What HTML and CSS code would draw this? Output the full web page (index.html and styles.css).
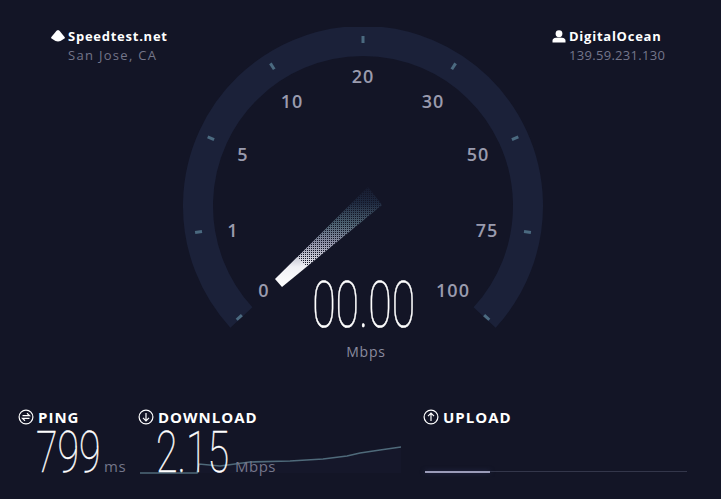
FILE: index.html
```html
<!DOCTYPE html>
<html lang="en">
<head>
  <meta charset="UTF-8" />
  <title>Speedtest</title>
  <link rel="stylesheet" href="styles.css">
</head>
<body>
  <div class="top">
    <div class="host host-left">
      <div class="host-name">
        <svg class="host-icon" width="14" height="12" viewBox="0 0 14 12"><path d="M7 0 L8.5 0.8 L13.8 7.2 L13.8 8.2 L9.5 11 Q7 11.8 4.5 11 L0.2 8.2 L0.2 7.2 L5.5 0.8 Z" fill="#fff"/></svg>
        Speedtest.net
      </div>
      <div class="host-sub">San Jose, CA</div>
    </div>

    <svg class="gauge" width="360" height="340" viewBox="-180 -179 360 340">
      <defs>
        <linearGradient id="needle-fade" x1="0" y1="0" x2="0" y2="1">
          <stop offset="0" stop-color="#161a2e"/>
          <stop offset="0.16" stop-color="#1f2a40"/>
          <stop offset="0.38" stop-color="#4f6473"/>
          <stop offset="0.56" stop-color="#8f91a6"/>
          <stop offset="0.8" stop-color="#f0f0f5"/>
          <stop offset="1" stop-color="#fff"/>
        </linearGradient>
        <pattern id="needle-dither" width="2" height="2" patternUnits="userSpaceOnUse">
          <rect width="1" height="1" fill="#131526"/>
        </pattern>
      </defs>
      <path class="ring" d="M -121.6 111.5 A 165 165 0 1 1 121.6 111.5"/>
      <g class="ticks">
        <rect x="-1.5" y="-170" width="3" height="7" transform="rotate(-132)"/>
        <rect x="-1.5" y="-170" width="3" height="7" transform="rotate(-99)"/>
        <rect x="-1.5" y="-170" width="3" height="7" transform="rotate(-66)"/>
        <rect x="-1.5" y="-170" width="3" height="7" transform="rotate(-33)"/>
        <rect x="-1.5" y="-170" width="3" height="7"/>
        <rect x="-1.5" y="-170" width="3" height="7" transform="rotate(33)"/>
        <rect x="-1.5" y="-170" width="3" height="7" transform="rotate(66)"/>
        <rect x="-1.5" y="-170" width="3" height="7" transform="rotate(99)"/>
        <rect x="-1.5" y="-170" width="3" height="7" transform="rotate(132)"/>
      </g>
      <g class="scale">
        <text x="-99" y="91">0</text>
        <text x="-130" y="31">1</text>
        <text x="-120" y="-45">5</text>
        <text x="-71" y="-98">10</text>
        <text x="0" y="-123">20</text>
        <text x="70" y="-98">30</text>
        <text x="115" y="-45">50</text>
        <text x="124" y="31">75</text>
        <text x="90" y="91">100</text>
      </g>
      <path d="M -88 73 L -81 81 L 19 -1 L 5 -19 Z" fill="url(#needle-fade)"/>
      <path d="M -66.5 50 L -56 60.5 L 19 -1 L 5 -19 Z" fill="url(#needle-dither)"/>
      <text class="speed" x="1" y="121" transform="scale(0.67 1)">00.00</text>
      <text class="speed-unit" x="3" y="151">Mbps</text>
    </svg>

    <div class="host host-right">
      <div class="host-name">
        <svg class="host-icon" width="14" height="13" viewBox="0 0 14 13"><circle cx="7" cy="3.7" r="3.4" fill="#fff"/><path d="M0.5 12.5 V10.5 Q0.5 8.3 4 7.8 Q7 7 10 7.8 Q13.5 8.3 13.5 10.5 V12.5 Z" fill="#fff"/></svg>
        DigitalOcean
      </div>
      <div class="host-sub host-ip">139.59.231.130</div>
    </div>
  </div>

  <div class="stats">
    <div class="stat stat-ping">
      <div class="stat-label">
        <svg class="stat-icon" width="16" height="16" viewBox="0 0 16 16"><circle cx="8" cy="8" r="6.9"/><path d="M4.5 6.6 H11.5 L9 4.2 M11.5 9.4 H4.5 L7 11.8"/></svg>
        PING
      </div>
      <div class="stat-body">
        <span class="stat-value">799</span><span class="stat-unit">ms</span>
      </div>
    </div>

    <div class="stat stat-download">
      <div class="stat-label">
        <svg class="stat-icon" width="16" height="16" viewBox="0 0 16 16"><circle cx="8" cy="8" r="6.9"/><path d="M8 4 V11.5 M5 8.8 L8 11.8 L11 8.8"/></svg>
        DOWNLOAD
      </div>
      <div class="stat-body">
        <svg class="chart" width="263" height="40" viewBox="0 0 263 40">
          <path class="chart-fill" d="M2 38 L59 38 L61 29 L82 31 L112 27 L152 26 L185 24 L209 21 L222 18 L242 15 L263 12 L263 38 Z"/>
          <path class="chart-line" d="M2 38 L59 38 L61 29 L82 31 L112 27 L152 26 L185 24 L209 21 L222 18 L242 15 L263 12"/>
        </svg>
        <span class="stat-value">2.15</span><span class="stat-unit">Mbps</span>
      </div>
    </div>

    <div class="stat stat-upload">
      <div class="stat-label">
        <svg class="stat-icon" width="16" height="16" viewBox="0 0 16 16"><circle cx="8" cy="8" r="6.9"/><path d="M8 12 V4.5 M5 7.2 L8 4.2 L11 7.2"/></svg>
        UPLOAD
      </div>
      <div class="upload-track"><div class="upload-done"></div></div>
    </div>
  </div>
</body>
</html>
```

FILE: styles.css
```css
body {
  margin: 0;
  background-color: #131526;
  font-family: "Open Sans", Arial, sans-serif;
  color: #fff;
  overflow: hidden;
}
.top {
  display: flex;
  padding-top: 27px;
}
.host {
  padding-top: 1px;
}
.host-left {
  width: 132px;
  padding-left: 51px;
}
.host-right {
  padding-left: 9px;
}
.host-name {
  display: flex;
  align-items: center;
  gap: 3px;
  font-size: 13px;
  font-weight: 700;
  line-height: 16px;
  letter-spacing: 0.75px;
  white-space: nowrap;
}
.host-sub {
  margin-top: 3px;
  padding-left: 17px;
  font-size: 13px;
  line-height: 16px;
  letter-spacing: 1.3px;
  color: #74768a;
  white-space: nowrap;
}
.host-ip {
  letter-spacing: 0.3px;
}
.gauge {
  display: block;
  flex: none;
}
.ring {
  fill: none;
  stroke: #1b2139;
  stroke-width: 30;
}
.ticks rect {
  fill: #4b6a80;
}
.scale text {
  fill: #9a9bae;
  font-size: 18px;
  font-weight: 600;
  letter-spacing: 1px;
  text-anchor: middle;
}
.speed {
  fill: #fff;
  stroke: #fff;
  stroke-width: 0.5;
  font-family: Roboto, sans-serif;
  font-size: 64px;
  font-weight: 100;
  text-anchor: middle;
}
.speed-unit {
  fill: #8a8b9e;
  font-size: 14px;
  text-anchor: middle;
  letter-spacing: 0.8px;
}
.stats {
  display: grid;
  grid-template-columns: 120px 285px 1fr;
  margin-top: 41px;
  padding-left: 18px;
}
.stat-label {
  display: flex;
  align-items: center;
  gap: 4px;
  font-size: 15px;
  font-weight: 700;
  line-height: 18px;
  letter-spacing: 1px;
}
.stat-icon {
  fill: none;
  stroke: #fff;
  stroke-width: 1.2;
}
.stat-body {
  position: relative;
  display: flex;
  align-items: baseline;
  height: 48px;
  padding-top: 3px;
  padding-left: 18px;
}
.stat-value {
  display: inline-block;
  font-family: Roboto, sans-serif;
  font-size: 57px;
  font-weight: 100;
  line-height: 48px;
  -webkit-text-stroke: 0.4px #fff;
  transform: scaleX(0.69);
  transform-origin: left;
}
.stat-ping .stat-value {
  width: 68px;
}
.stat-download .stat-value {
  width: 79px;
}
.stat-unit {
  position: relative;
  font-size: 15px;
  letter-spacing: 0.5px;
  color: #74768a;
}
.chart {
  position: absolute;
  left: 0;
  top: 9px;
}
.chart-line {
  fill: none;
  stroke: #4f6a7a;
  stroke-width: 1.6;
}
.chart-fill {
  fill: #1b2139;
  opacity: 0.25;
}
.upload-track {
  width: 262px;
  height: 1px;
  margin-top: 45px;
  margin-left: 2px;
  background-color: #33364a;
}
.upload-done {
  width: 65px;
  height: 2px;
  background-color: #9a9bb8;
  box-shadow: 0 0 5px #2a2f50;
}
```
